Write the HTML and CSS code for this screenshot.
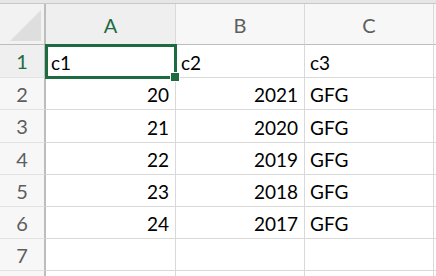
FILE: index.html
```html
<!DOCTYPE html>
<html lang="en">
<head>
    <meta charset="UTF-8">
    <title>Sheet</title>
    <link rel="stylesheet" href="styles.css">
</head>
<body>
    <div class="sheet">
        <div class="topbar"></div>
        <div class="grid">
            <div class="corner"><div class="triangle"></div></div>
            <div class="col-head active">A</div>
            <div class="col-head">B</div>
            <div class="col-head">C</div>
            <div class="col-head edge"></div>

            <div class="row-head active">1</div>
            <div class="cell selected">c1<span class="handle"></span></div>
            <div class="cell">c2</div>
            <div class="cell">c3</div>
            <div class="cell edge"></div>

            <div class="row-head">2</div>
            <div class="cell num">20</div>
            <div class="cell num">2021</div>
            <div class="cell">GFG</div>
            <div class="cell edge"></div>

            <div class="row-head">3</div>
            <div class="cell num">21</div>
            <div class="cell num">2020</div>
            <div class="cell">GFG</div>
            <div class="cell edge"></div>

            <div class="row-head">4</div>
            <div class="cell num">22</div>
            <div class="cell num">2019</div>
            <div class="cell">GFG</div>
            <div class="cell edge"></div>

            <div class="row-head">5</div>
            <div class="cell num">23</div>
            <div class="cell num">2018</div>
            <div class="cell">GFG</div>
            <div class="cell edge"></div>

            <div class="row-head">6</div>
            <div class="cell num">24</div>
            <div class="cell num">2017</div>
            <div class="cell">GFG</div>
            <div class="cell edge"></div>

            <div class="row-head">7</div>
            <div class="cell"></div>
            <div class="cell"></div>
            <div class="cell"></div>
            <div class="cell edge"></div>

            <div class="row-head"></div>
            <div class="cell"></div>
            <div class="cell"></div>
            <div class="cell"></div>
            <div class="cell edge"></div>
        </div>
    </div>
</body>
</html>
```

FILE: styles.css
```css
body {
    margin: 0;
    background-color: #ffffff;
    font-family: Lato, "Open Sans", sans-serif;
    overflow: hidden;
}
.sheet {
    width: 436px;
    height: 276px;
    overflow: hidden;
}
.topbar {
    height: 3px;
    background-color: #e6e6e6;
    border-bottom: 1px solid #c8c8c8;
}
.grid {
    display: grid;
    grid-template-columns: 46px 130px 129px 129px 40px;
    grid-template-rows: 41px 33px 32px 33px 32px 32px 32px 32px 32px;
}
.corner {
    position: relative;
    background-color: #f2f2f2;
    border-right: 2px solid #bdbdbd;
    border-bottom: 1px solid #bdbdbd;
    overflow: hidden;
}
.triangle {
    position: absolute;
    right: 3px;
    bottom: 3px;
    width: 0;
    height: 0;
    border-left: 31px solid transparent;
    border-bottom: 31px solid #dedede;
}
.col-head {
    background-color: #f7f7f7;
    border-right: 1px solid #dadada;
    border-bottom: 1px solid #bdbdbd;
    color: #5e5e5e;
    font-size: 20px;
    display: flex;
    align-items: center;
    justify-content: center;
    padding-top: 2px;
}
.col-head.active {
    color: #1e6b41;
    background-color: #efefef;
}
.row-head {
    background-color: #f7f7f7;
    border-right: 2px solid #bdbdbd;
    border-bottom: 1px solid #e2e2e2;
    color: #5e5e5e;
    font-size: 20px;
    display: flex;
    align-items: center;
    justify-content: center;
}
.row-head.active {
    color: #1e6b41;
    background-color: #efefef;
}
.cell {
    position: relative;
    border-right: 1px solid #d9d9d9;
    border-bottom: 1px solid #d9d9d9;
    font-size: 19px;
    color: #000000;
    display: flex;
    align-items: center;
    padding: 2px 5px 0 5px;
}
.cell.num {
    justify-content: flex-end;
    padding-right: 6px;
}
.edge {
    border-right: none;
}
.selected {
    outline: 3px solid #1e6b41;
    outline-offset: -2px;
    z-index: 1;
}
.handle {
    position: absolute;
    right: -5px;
    bottom: -5px;
    width: 8px;
    height: 8px;
    background-color: #1e6b41;
    border: 1px solid #ffffff;
}
```
